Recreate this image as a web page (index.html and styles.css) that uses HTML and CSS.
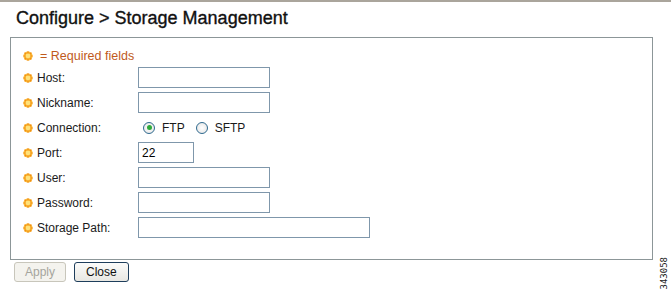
FILE: index.html
```html
<!DOCTYPE html>
<html>
   <head>
      <meta charset="utf-8">
      <title>Configure &gt; Storage Management</title>
      <link rel="stylesheet" href="styles.css">
   </head>
   <body>
      <svg width="0" height="0" class="defs">
         <defs>
            <g id="req">
               <circle cx="5" cy="5" r="4.6" fill="#fbb930"/>
               <path d="M5 0.3 L5 9.7 M0.3 5 L9.7 5 M1.6 1.6 L8.4 8.4 M8.4 1.6 L1.6 8.4" stroke="#f08c18" stroke-width="1.2"/>
               <circle cx="5" cy="5" r="2.4" fill="#ffe27a"/>
            </g>
         </defs>
      </svg>

      <h1 class="title">Configure &gt; Storage Management</h1>

      <div class="panel">
         <div class="row required">
            <svg class="req" viewBox="0 0 10 10"><use href="#req"/></svg>
            <span>= Required fields</span>
         </div>
         <div class="row">
            <label><svg class="req" viewBox="0 0 10 10"><use href="#req"/></svg>Host:</label>
            <input type="text" class="field">
         </div>
         <div class="row">
            <label><svg class="req" viewBox="0 0 10 10"><use href="#req"/></svg>Nickname:</label>
            <input type="text" class="field">
         </div>
         <div class="row">
            <label><svg class="req" viewBox="0 0 10 10"><use href="#req"/></svg>Connection:</label>
            <span class="radio on"></span><span class="opt">FTP</span>
            <span class="radio"></span><span class="opt">SFTP</span>
         </div>
         <div class="row">
            <label><svg class="req" viewBox="0 0 10 10"><use href="#req"/></svg>Port:</label>
            <input type="text" class="field short" value="22">
         </div>
         <div class="row">
            <label><svg class="req" viewBox="0 0 10 10"><use href="#req"/></svg>User:</label>
            <input type="text" class="field">
         </div>
         <div class="row">
            <label><svg class="req" viewBox="0 0 10 10"><use href="#req"/></svg>Password:</label>
            <input type="password" class="field">
         </div>
         <div class="row">
            <label><svg class="req" viewBox="0 0 10 10"><use href="#req"/></svg>Storage Path:</label>
            <input type="text" class="field long">
         </div>
      </div>

      <div class="buttons">
         <button class="btn disabled" disabled>Apply</button>
         <button class="btn">Close</button>
      </div>

      <div class="figno">343058</div>
   </body>
</html>
```

FILE: styles.css
```css
body {margin:0; font-family:"Liberation Sans",Arial,sans-serif; font-size:12px; color:#1a1a1a; border-top:2px solid #aaa59c; position:relative; height:289px;}
.defs {position:absolute;}
.title {font-size:18px; font-weight:normal; margin:6px 0 0 16px; height:29px; color:#111; -webkit-text-stroke:0.35px #111;}
.panel {margin-left:10px; width:629px; height:212px; border:1px solid #8c9698; padding:9px 0 0 12px; box-sizing:content-box;}
.row {display:flex; align-items:center; height:25px;}
.row.required {height:18px; color:#c05a1c; font-size:12.5px;}
.row.required span {margin-left:3px;}
.req {width:10px; height:10px; margin-right:4px; flex:none;}
label {display:flex; align-items:center; width:115px; flex:none;}
.field {width:132px; height:21px; box-sizing:border-box; border:1px solid #7f97ab; margin:0; padding:0 3px; font-family:"Liberation Sans",Arial,sans-serif; font-size:12px; outline:none;}
.field.short {width:56px;}
.field.long {width:232px;}
.radio {width:12px; height:12px; box-sizing:border-box; border:1px solid #2f6a8f; border-radius:50%; background:radial-gradient(circle at 50% 50%, #fff 0, #e2e2e2 100%); margin-left:5px; display:flex; align-items:center; justify-content:center;}
.radio.on::after {content:""; width:5px; height:5px; border-radius:50%; background:#2faa3a;}
.opt {margin-left:7px; margin-right:6px;}
.buttons {display:flex; gap:8px; margin:2px 0 0 14px;}
.btn {height:20px; padding:0 11px; font-family:"Liberation Sans",Arial,sans-serif; font-size:12px; background:linear-gradient(#fbfbfa,#e8e7e2); border:1px solid #1e3e5c; border-radius:3px; color:#111;}
.btn.disabled {border-color:#c8c6bb; color:#a5a59d; background:#f4f3ee; padding:0 10px;}
.figno {position:absolute; right:2px; bottom:1px; writing-mode:vertical-rl; transform:rotate(180deg); font-family:"DejaVu Sans Mono",monospace; font-size:9px; color:#222;}
```
